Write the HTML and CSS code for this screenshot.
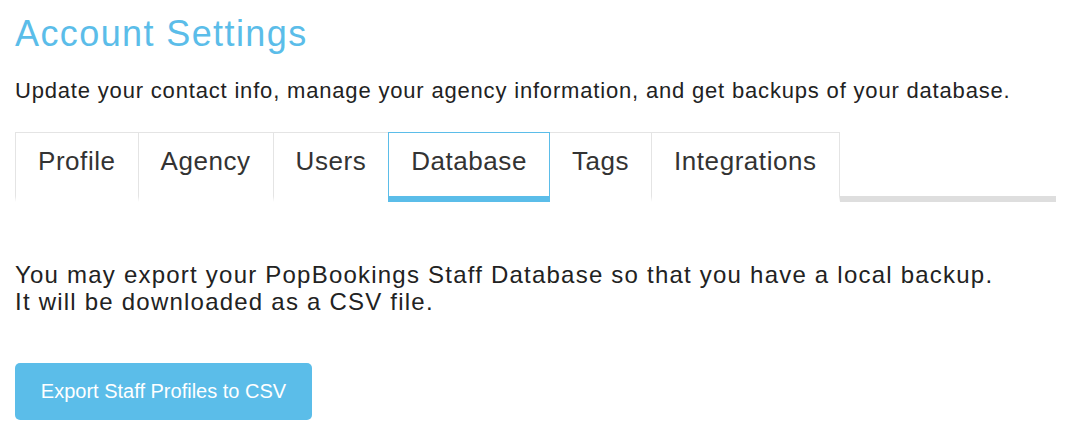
FILE: index.html
```html
<!DOCTYPE html>
<html lang="en">
<head>
<meta charset="utf-8">
<title>Account Settings</title>
<link rel="stylesheet" href="styles.css">
</head>
<body>
<main class="page">
  <h1 class="title">Account Settings</h1>
  <p class="subtitle">Update your contact info, manage your agency information, and get backups of your database.</p>
  <nav class="tabs">
    <a class="tab">Profile</a>
    <a class="tab">Agency</a>
    <a class="tab">Users</a>
    <a class="tab tab-active">Database</a>
    <a class="tab">Tags</a>
    <a class="tab">Integrations</a>
  </nav>
  <section class="panel">
    <p class="panel-text">You may export your PopBookings Staff Database so that you have a local backup.<br>It will be downloaded as a CSV file.</p>
    <button class="btn-export" type="button">Export Staff Profiles to CSV</button>
  </section>
</main>
</body>
</html>
```
FILE: styles.css
```css
html, body {
  margin: 0;
  padding: 0;
  background: #ffffff;
}

body {
  font-family: "Liberation Sans", Arial, Helvetica, sans-serif;
  color: #2a2a2a;
}

.page {
  padding: 14px 20px 0 15px;
  display: flex;
  flex-direction: column;
  align-items: flex-start;
}

.title {
  margin: 0;
  font-size: 36px;
  line-height: 40px;
  font-weight: 400;
  letter-spacing: 1.4px;
  color: #5bbde9;
}

.subtitle {
  margin: 25px 0 0;
  font-size: 22px;
  line-height: 24px;
  letter-spacing: 0.82px;
  color: #222;
}

.tabs {
  margin-top: 29px;
  display: flex;
  align-self: stretch;
  border-bottom: 6px solid #dedede;
}

.tab {
  display: block;
  padding: 13px 22px 20px;
  margin-bottom: -6px;
  margin-right: -1px;
  font-size: 26px;
  line-height: 30px;
  letter-spacing: 0.55px;
  color: #333;
  border: 1px solid #e4e4e4;
  border-bottom: 6px solid transparent;
  background: #fff;
}

.tab-active {
  position: relative;
  z-index: 1;
  border-color: #5bbde9;
}

.panel {
  display: flex;
  flex-direction: column;
  align-items: flex-start;
}

.panel-text {
  margin: 59px 0 0;
  font-size: 24px;
  line-height: 27px;
  letter-spacing: 1.22px;
  color: #222;
}

.btn-export {
  margin-top: 48px;
  width: 297px;
  height: 57px;
  padding: 0;
  border: none;
  border-radius: 5px;
  background: #5bbde9;
  color: #fff;
  font-family: "Liberation Sans", Arial, Helvetica, sans-serif;
  font-size: 20px;
  letter-spacing: 0;
}
```
